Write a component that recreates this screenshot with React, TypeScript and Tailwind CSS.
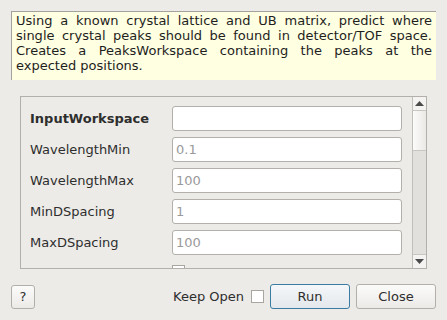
const FIELDS = [
  { label: "InputWorkspace", placeholder: "", bold: true },
  { label: "WavelengthMin", placeholder: "0.1" },
  { label: "WavelengthMax", placeholder: "100" },
  { label: "MinDSpacing", placeholder: "1" },
  { label: "MaxDSpacing", placeholder: "100" },
];

const font = "font-['DejaVu_Sans',sans-serif]";

function Field({ label, placeholder, bold }: { label: string; placeholder: string; bold?: boolean }) {
  return (
    <div className="flex h-[25px] items-center">
      <span className={`w-[142px] text-[13px] text-[#2e2e2e] ${bold ? "font-bold" : ""}`}>{label}</span>
      <div className="flex h-[25px] w-[230px] items-center rounded-[3px] border border-[#b3b0ab] bg-white px-[3px] text-[13px] text-[#9a9a9a]">
        {placeholder}
      </div>
    </div>
  );
}

function ScrollBar() {
  return (
    <div className="flex w-[14px] flex-col border-l border-[#c2bfba] bg-[#e2e0dc]">
      <div className="flex h-[14px] items-center justify-center border-b border-[#c9c6c1] bg-[#f4f3f1]">
        <svg width="9" height="5" viewBox="0 0 9 5"><path d="M0 5 L4.5 0 L9 5 Z" fill="#4a4a4a" /></svg>
      </div>
      <div className="h-[40px] border-b border-[#c9c6c1] bg-gradient-to-r from-[#fbfbfa] to-[#ebe9e6]" />
      <div className="flex-1" />
      <div className="flex h-[14px] items-center justify-center border-t border-[#c9c6c1] bg-[#f4f3f1]">
        <svg width="9" height="5" viewBox="0 0 9 5"><path d="M0 0 L4.5 5 L9 0 Z" fill="#4a4a4a" /></svg>
      </div>
    </div>
  );
}

export default function App() {
  return (
    <div className={`flex h-[320px] w-[447px] flex-col bg-[#edebe7] ${font} text-[#2e2e2e]`}>
      <div className="mx-[11px] mt-[11px] h-[69px] border-l border-t border-[#a5a29d] bg-[#ffffe1] pl-[4px] pr-[4px] pt-[1px] text-justify text-[13px] leading-[15px] text-[#1e1e1e]">
        Using a known crystal lattice and UB matrix, predict where single crystal peaks should be found in detector/TOF space. Creates a PeaksWorkspace containing the peaks at the expected positions.
      </div>

      <div className="ml-[20px] mt-[16px] flex h-[173px] w-[407px] overflow-hidden border border-[#b3b0ab]">
        <div className="flex flex-1 flex-col gap-[6px] overflow-hidden pl-[9px] pt-[9px]">
          {FIELDS.map((f) => (
            <Field key={f.label} {...f} />
          ))}
          <div className="flex h-[25px] items-start pl-[142px] pt-[4px]">
            <div className="h-[13px] w-[13px] shrink-0 border border-[#a9a6a1] bg-white" />
            <span className="ml-[6px] mt-[1px] text-[13px] leading-[15px]">Include peaks</span>
          </div>
        </div>
        <ScrollBar />
      </div>

      <div className="mx-[11px] mt-[15px] flex h-[25px] items-center">
        <button className="flex h-[24px] w-[24px] items-center justify-center rounded-[3px] border border-[#b3b0ab] bg-gradient-to-b from-[#fbfbfa] to-[#eceae7] text-[13px]">?</button>
        <div className="flex-1" />
        <span className="text-[13px]">Keep Open</span>
        <div className="ml-[7px] h-[13px] w-[13px] border border-[#a9a6a1] bg-white" />
        <button className="ml-[6px] flex h-[25px] w-[80px] items-center justify-center rounded-[3px] border border-[#3c7ca3] bg-gradient-to-b from-[#f5f7f9] to-[#e3e8ec] text-[13px]">Run</button>
        <button className="ml-[6px] flex h-[25px] w-[80px] items-center justify-center rounded-[3px] border border-[#b3b0ab] bg-gradient-to-b from-[#fbfbfa] to-[#eceae7] text-[13px]">Close</button>
      </div>
    </div>
  );
}
